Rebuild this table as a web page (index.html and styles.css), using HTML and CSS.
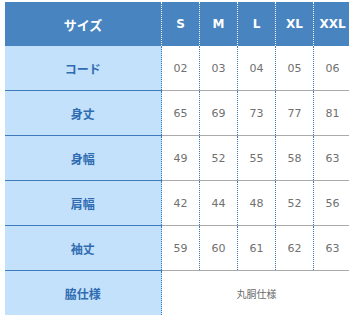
FILE: index.html
```html
<!DOCTYPE html>
<html lang="ja">
<head>
<meta charset="utf-8">
<link rel="stylesheet" href="styles.css">
</head>
<body>
<table class="size-table">
  <colgroup>
    <col class="c-label">
    <col class="c-size"><col class="c-size"><col class="c-size"><col class="c-size"><col class="c-size">
  </colgroup>
  <thead>
    <tr>
      <th class="h-label">サイズ</th>
      <th>S</th><th>M</th><th>L</th><th>XL</th><th>XXL</th>
    </tr>
  </thead>
  <tbody>
    <tr><th class="r-label">コード</th><td>02</td><td>03</td><td>04</td><td>05</td><td>06</td></tr>
    <tr><th class="r-label">身丈</th><td>65</td><td>69</td><td>73</td><td>77</td><td>81</td></tr>
    <tr><th class="r-label">身幅</th><td>49</td><td>52</td><td>55</td><td>58</td><td>63</td></tr>
    <tr><th class="r-label">肩幅</th><td>42</td><td>44</td><td>48</td><td>52</td><td>56</td></tr>
    <tr><th class="r-label">袖丈</th><td>59</td><td>60</td><td>61</td><td>62</td><td>63</td></tr>
    <tr class="last"><th class="r-label">脇仕様</th><td colspan="5" class="note">丸胴仕様</td></tr>
  </tbody>
</table>
</body>
</html>
```
FILE: styles.css
```css
html { overflow: hidden; }
body {
  margin: 0;
  background: #fff;
  font-family: "DejaVu Sans", "Noto Sans CJK JP", sans-serif;
}
.size-table {
  margin: 2px 0 0 4px;
  border-collapse: collapse;
  table-layout: fixed;
  width: 347px;
}
.c-label { width: 157px; }
.c-size { width: 38px; }
thead th {
  height: 44px;
  padding: 0;
  background: #4884c0;
  color: #fff;
  font-family: "DejaVu Sans", "Noto Sans CJK JP", sans-serif;
  font-weight: bold;
  font-size: 12px;
  text-align: center;
  border-right: 1px dotted #fff;
}
thead .h-label {
  border-left: 1px dotted #fff;
  font-family: "Noto Sans CJK JP", sans-serif;
  font-size: 13px;
}
tbody th, tbody td {
  height: 44px;
  padding: 0;
  text-align: center;
}
.r-label {
  background: #c4e1fc;
  color: #2f6cb0;
  font-family: "Noto Sans CJK JP", sans-serif;
  font-weight: bold;
  font-size: 12px;
  border-bottom: 1px solid #3d7bbd;
  border-right: 1px dotted #3d7bbd;
}
tbody td {
  color: #707070;
  font-size: 11px;
  border-bottom: 1px solid #aaaaaa;
  border-right: 1px dotted #3d7bbd;
}
.last .r-label, .last td { border-bottom: none; }
.note {
  font-family: "Noto Sans CJK JP", sans-serif;
  font-size: 10px;
  color: #6a6a6a;
}
```
